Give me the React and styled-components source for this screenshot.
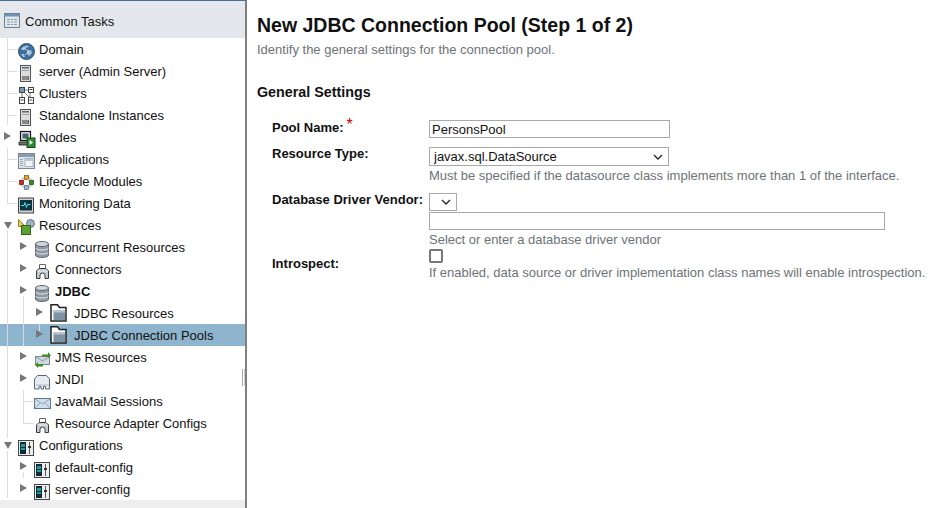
import React from "react";
import styled, { createGlobalStyle } from "styled-components";

const GlobalStyle = createGlobalStyle`
  html, body {
    margin: 0;
    padding: 0;
    background: #fff;
    font-family: "Liberation Sans", Arial, sans-serif;
  }
`;

const chevron = encodeURIComponent(
  '<svg xmlns="http://www.w3.org/2000/svg" width="10" height="6" viewBox="0 0 10 6"><path d="M1 1l4 4 4-4" fill="none" stroke="#222" stroke-width="1.3"/></svg>'
);

const Page = styled.div`
  display: flex;
  width: 930px;
  height: 508px;
  overflow: hidden;
`;

const Sidebar = styled.aside`
  position: relative;
  flex: none;
  width: 245px;
  display: flex;
  flex-direction: column;
  border-right: 2px solid #808080;
  border-top: 1px solid #4a7097;
  background: #fff;
`;

const Handle = styled.div`
  position: absolute;
  right: 0;
  top: 368px;
  width: 1px;
  height: 17px;
  border-left: 1px solid #aaaaaa;
  border-right: 1px solid #d0d0d0;
`;

const TasksHeader = styled.div`
  flex: none;
  height: 37px;
  box-sizing: border-box;
  padding: 3px 0 0 4px;
  display: flex;
  align-items: center;
  gap: 4px;
  background: #e4e8ec;
  color: #111;
  font-size: 13px;
`;

const Tree = styled.div`
  flex: none;
  display: flex;
  flex-direction: column;
`;

const Footer = styled.div`
  flex: 1;
  background: #eeeeee;
`;

const lineImages = (lines, color) =>
  lines.map(() => `linear-gradient(${color}, ${color})`).join(",");

const Row = styled.div`
  height: 22px;
  box-sizing: border-box;
  display: flex;
  align-items: center;
  padding-left: ${(p) => 4 + p.$level * 16}px;
  color: #111;
  font-size: 13px;
  font-weight: ${(p) => (p.$bold ? 700 : 400)};
  background-color: ${(p) => (p.$selected ? "#8fb4cd" : "transparent")};
  background-repeat: no-repeat;
  background-image: ${(p) =>
    p.$lines.length ? lineImages(p.$lines, p.$selected ? "#cfdfe9" : "#dddddd") : "none"};
  background-position: ${(p) => p.$lines.map((l) => `${l[0]}px ${l[1]}px`).join(",") || "0 0"};
  background-size: ${(p) => p.$lines.map((l) => `${l[2]}px ${l[3]}px`).join(",") || "auto"};
`;

const ArrowSlot = styled.span`
  flex: none;
  width: 14px;
  height: 14px;
  display: flex;
  align-items: center;
`;

const ArrowRight = styled.span`
  width: 0;
  height: 0;
  margin-top: -2px;
  border-left: 7px solid #777;
  border-top: 4px solid transparent;
  border-bottom: 4px solid transparent;
`;

const ArrowDown = styled.span`
  width: 0;
  height: 0;
  margin-top: 1px;
  border-top: 7px solid #777;
  border-left: 4px solid transparent;
  border-right: 4px solid transparent;
`;

const IconSlot = styled.span`
  flex: none;
  width: 17px;
  height: 17px;
  margin-top: 5px;
  margin-right: ${(p) => (p.$level === 2 ? 7 : 4)}px;
  svg {
    display: block;
    overflow: visible;
  }
`;

const Main = styled.main`
  flex: 1;
  min-width: 0;
  padding: 15px 0 0 10px;
  color: #000;
`;

const Title = styled.h1`
  margin: 0;
  font-size: 19.5px;
  line-height: 21px;
  font-weight: 700;
  color: #111;
`;

const Subtitle = styled.p`
  margin: 6px 0 0;
  font-size: 13px;
  line-height: 16px;
  color: #6d7378;
`;

const SectionTitle = styled.h2`
  margin: 25px 0 0;
  font-size: 14.3px;
  line-height: 18px;
  font-weight: 700;
  color: #111;
`;

const Form = styled.div`
  display: grid;
  grid-template-columns: 157px 1fr;
  padding: 19px 0 0 15px;
`;

const Label = styled.div`
  font-size: 13px;
  line-height: 16px;
  font-weight: 700;
  color: #111;
  margin-top: ${(p) => p.$top}px;
`;

const Required = styled.span`
  color: #c00;
  font-weight: 400;
  font-size: 16px;
  margin-left: 3px;
  vertical-align: 2px;
  line-height: 0;
`;

const Field = styled.div`
  display: flex;
  flex-direction: column;
  align-items: flex-start;
  gap: 1px;
  padding-bottom: ${(p) => p.$bottom || 0}px;
`;

const TextInput = styled.input`
  box-sizing: border-box;
  width: ${(p) => p.$width}px;
  height: 18px;
  margin: 0;
  padding: 0 2px;
  border: 1px solid #a9a9a9;
  border-radius: 0;
  outline: none;
  font-family: inherit;
  font-size: 13px;
  color: #111;
`;

const Select = styled.select`
  box-sizing: border-box;
  appearance: none;
  width: ${(p) => p.$width}px;
  height: ${(p) => p.$height}px;
  margin: 0;
  padding: 0 0 0 4px;
  border: 1px solid #a9a9a9;
  border-radius: 0;
  background: #fff url("data:image/svg+xml,${chevron}") no-repeat right 5px center;
  font-family: inherit;
  font-size: 13px;
  color: #111;
`;

const Help = styled.div`
  margin-top: 1px;
  font-size: 13px;
  line-height: 16px;
  color: #6d7378;
  white-space: nowrap;
`;

const Check = styled.span`
  display: block;
  box-sizing: border-box;
  width: 14px;
  height: 14px;
  border: 2px solid #77767f;
  border-radius: 2px;
  background: #fff;
`;

const Table = () => (
  <svg width="17" height="16" viewBox="0 0 17 16">
    <rect x="0.5" y="0.5" width="15" height="14" fill="#dfe7ef" stroke="#6f8296" />
    <rect x="1" y="1" width="14" height="2.5" fill="#6f93b8" />
    <path d="M3 6h3v1H3zM7 6h2v1H7zM10 6h3v1h-3zM3 8.5h3v1H3zM7 8.5h2v1H7zM10 8.5h3v1h-3zM3 11h3v1H3zM7 11h2v1H7zM10 11h3v1h-3z" fill="#8a97a5" />
  </svg>
);

const Globe = () => (
  <svg width="17" height="17" viewBox="0 0 17 17">
    <circle cx="8.5" cy="8.5" r="8" fill="#3f6f9f" stroke="#2d5378" />
    <path d="M3 6c2-3 5-4 8-3-1 2-3 1-4 3s-3 1-4 0zM9 8l4-1 1 3-3 3-2-2zM3 11l3 0 1 3-2 0z" fill="#a9c3da" />
    <path d="M5 5l6 3-4 4" fill="none" stroke="#e6eef5" strokeWidth="0.7" />
  </svg>
);

const ServerBox = () => (
  <svg width="17" height="17" viewBox="0 0 17 17">
    <rect x="2.5" y="0.5" width="10" height="16" fill="#dcdcdc" stroke="#555" />
    <rect x="4" y="2" width="7" height="1.5" fill="#5c6b7a" />
    <rect x="4" y="5" width="7" height="1" fill="#9aa4ad" />
    <rect x="4" y="11" width="7" height="4" fill="#666" />
    <path d="M5 11v4M7 11v4M9 11v4" stroke="#ccc" strokeWidth="0.7" />
  </svg>
);

const Clusters = () => (
  <svg width="17" height="17" viewBox="0 0 17 17">
    <path d="M5 4l7 7M4 6v5M12 5v6M6 3h4" stroke="#555" fill="none" strokeWidth="0.8" />
    <rect x="1.5" y="0.5" width="5" height="5" fill="#6f9cc2" stroke="#444" />
    <rect x="10.5" y="0.5" width="5" height="5" fill="#fff" stroke="#444" />
    <rect x="1.5" y="10.5" width="5" height="6" fill="#fff" stroke="#444" />
    <rect x="10.5" y="10.500" width="5" height="6" fill="#fff" stroke="#444" />
    <path d="M11.5 2.500h3M2.500 13h3M11.500 13h3" stroke="#444" />
  </svg>
);

const Nodes = () => (
  <svg width="17" height="17" viewBox="0 0 17 17">
    <rect x="2.500" y="0.500" width="10" height="9" fill="#dfe6ea" stroke="#111" strokeWidth="1.200" />
    <rect x="4.500" y="2.500" width="6" height="5" fill="#4e6470" />
    <path d="M1 11h11v3H1z" fill="#777" stroke="#111" strokeWidth="0.800" />
    <rect x="9" y="7" width="8" height="9.500" fill="#2e8b2e" stroke="#14491a" />
    <path d="M11.500 9v5l3.500-2.500z" fill="#fff" />
  </svg>
);

const Apps = () => (
  <svg width="17" height="17" viewBox="0 0 17 17">
    <rect x="0.500" y="0.500" width="16" height="15" fill="#dde3e8" stroke="#7b8793" />
    <rect x="1" y="1" width="15" height="3" fill="#8b9cac" />
    <path d="M2 6h3v1H2zM2 8h3v1H2zM2 10h3v1H2zM2 12h3v1H2z" fill="#9cadbc" />
    <rect x="7" y="5.500" width="8" height="8" fill="#f3f6f8" stroke="#a5b5c2" />
    <rect x="7.500" y="6" width="7" height="2" fill="#b8c6d2" />
  </svg>
);

const Lifecycle = () => (
  <svg width="17" height="17" viewBox="0 0 17 17">
    <circle cx="8.500" cy="7.500" r="5.500" fill="none" stroke="#b5bdc6" strokeWidth="1.300" />
    <rect x="6.500" y="0.500" width="4" height="4" fill="#e8a020" stroke="#7a5a10" strokeWidth="0.700" />
    <rect x="1.500" y="5.500" width="4" height="4" fill="#cc2a2a" stroke="#701010" strokeWidth="0.700" />
    <rect x="11.500" y="5.500" width="4" height="4" fill="#3a8a2a" stroke="#1c4a12" strokeWidth="0.700" />
    <rect x="6.500" y="10.500" width="4" height="4" fill="#9fb8d2" stroke="#51708f" strokeWidth="0.700" />
  </svg>
);

const Monitor = () => (
  <svg width="17" height="17" viewBox="0 0 17 17">
    <rect x="0.500" y="1" width="15" height="15" fill="#d4d4d4" stroke="#444" />
    <rect x="2" y="3" width="12" height="10.500" fill="#0c3440" />
    <path d="M3 8.500h3l1-3 1.500 5 1-3h3" fill="none" stroke="#4fe3e0" />
  </svg>
);

const ResourcesGlyph = () => (
  <svg width="17" height="17" viewBox="0 0 17 17">
    <circle cx="12.500" cy="4.500" r="4" fill="#9db2c6" stroke="#66798c" />
    <path d="M0.500 0.500l7 7h-7z" fill="#f3c95c" stroke="#a57c1e" />
    <rect x="3.500" y="6.500" width="9" height="9" fill="#5aa12f" stroke="#33661a" />
  </svg>
);

const Database = () => (
  <svg width="17" height="17" viewBox="0 0 17 17">
    <path d="M1.500 3v11c0 1.500 2.500 2.500 6.500 2.500s6.500-1 6.500-2.500V3z" fill="#8f99a3" stroke="#5f6973" />
    <ellipse cx="8" cy="3" rx="6.500" ry="2.500" fill="#cfd6dc" stroke="#5f6973" />
    <path d="M1.500 7c1 1.500 3 2 6.500 2s5.500-.5 6.500-2M1.500 11c1 1.500 3 2 6.500 2s5.500-.5 6.500-2" fill="none" stroke="#e4e8eb" />
  </svg>
);

const Connector = () => (
  <svg width="17" height="17" viewBox="0 0 17 17">
    <path d="M5.500 5V1.500h6V5" fill="#fff" stroke="#666" />
    <path d="M2.500 15.500V8L5 5.500h7L14.500 8v7.500h-3.500v-3a2.500 2.500 0 0 0-5 0v3z" fill="#c2c9d0" stroke="#3a3a3a" />
    <path d="M3.500 8h10" stroke="#eef1f3" />
  </svg>
);

const Folder = () => (
  <svg width="17" height="17" viewBox="0 4 17 17">
    <path d="M1 18V1.800h6.500l2 2.700H16V18z" fill="#fff" stroke="#222" strokeWidth="1.500" />
    <path d="M3.500 17V7h11.500v10z" fill="#7f93a6" />
    <path d="M3.500 7h11.500v2.500H3.500z" fill="#b7c4d0" />
  </svg>
);

const Jms = () => (
  <svg width="17" height="17" viewBox="0 0 17 17">
    <rect x="1.500" y="5.500" width="14" height="8" fill="#cfd8e0" stroke="#7a8794" />
    <path d="M2 6l6.500 4L15 6" fill="none" stroke="#8c98a4" />
    <path d="M8 3.500h6V1l3 3.500L14 7V5.500H8z" fill="#3b8f1f" />
    <path d="M9 13h-5v-2l-3 3 3 3v-1.500h5z" fill="#3b8f1f" />
  </svg>
);

const Jndi = () => (
  <svg width="17" height="17" viewBox="0 0 17 17">
    <path d="M0.500 16V6l3-3.500h9l3 3.500v10h-4v-2.500h-2V16H7v-2.500H5V16z" fill="#e6ebf0" stroke="#5a6875" />
    <path d="M2 12h13" stroke="#aeb9c3" />
  </svg>
);

const Mail = () => (
  <svg width="17" height="17" viewBox="0 0 17 17">
    <rect x="0.500" y="3.500" width="16" height="10" fill="#cfe0ec" stroke="#607a90" />
    <path d="M1 4l7.500 5L16 4M1 13l5.500-5.500M16 13l-5.500-5.500" fill="none" stroke="#8da3b5" />
  </svg>
);

const Config = () => (
  <svg width="17" height="17" viewBox="0 0 17 17">
    <rect x="0.500" y="1.500" width="15" height="15" fill="#eee" stroke="#444" />
    <rect x="2" y="3" width="6" height="12" fill="#142a33" />
    <rect x="3" y="5" width="4" height="3" fill="#1aa0a0" />
    <rect x="3" y="9" width="4" height="2" fill="#1aa0a0" />
    <path d="M11.500 3v12" stroke="#555" />
    <rect x="10" y="7" width="3" height="2" fill="#333" />
  </svg>
);

const rows = [
  { icon: Globe, text: "Domain", level: 0, lines: [[7, 0, 1, 22], [7, 11, 10, 1]] },
  { icon: ServerBox, text: "server (Admin Server)", level: 0, lines: [[7, 0, 1, 22], [7, 11, 10, 1]] },
  { icon: Clusters, text: "Clusters", level: 0, lines: [[7, 0, 1, 22], [7, 11, 10, 1]] },
  { icon: ServerBox, text: "Standalone Instances", level: 0, lines: [[7, 0, 1, 21], [7, 11, 10, 1]] },
  { icon: Nodes, text: "Nodes", level: 0, arrow: "right", lines: [] },
  { icon: Apps, text: "Applications", level: 0, lines: [[7, 0, 1, 22], [7, 11, 10, 1]] },
  { icon: Lifecycle, text: "Lifecycle Modules", level: 0, lines: [[7, 0, 1, 22], [7, 11, 10, 1]] },
  { icon: Monitor, text: "Monitoring Data", level: 0, lines: [[7, 0, 1, 12], [7, 11, 10, 1]] },
  { icon: ResourcesGlyph, text: "Resources", level: 0, arrow: "down", lines: [[7, 16, 1, 6]] },
  { icon: Database, text: "Concurrent Resources", level: 1, arrow: "right", lines: [[7, 0, 1, 22]] },
  { icon: Connector, text: "Connectors", level: 1, arrow: "right", lines: [[7, 0, 1, 22]] },
  { icon: Database, text: "JDBC", level: 1, arrow: "right", bold: true, lines: [[7, 0, 1, 22], [23, 16, 1, 6]] },
  { icon: Folder, text: "JDBC Resources", level: 2, arrow: "right", lines: [[7, 0, 1, 22], [23, 0, 1, 22]] },
  { icon: Folder, text: "JDBC Connection Pools", level: 2, arrow: "right", selected: true, lines: [[7, 0, 1, 22], [23, 0, 1, 22], [39, 0, 1, 7]] },
  { icon: Jms, text: "JMS Resources", level: 1, arrow: "right", lines: [[7, 0, 1, 22]] },
  { icon: Jndi, text: "JNDI", level: 1, arrow: "right", lines: [[7, 0, 1, 22]] },
  { icon: Mail, text: "JavaMail Sessions", level: 1, lines: [[7, 0, 1, 22], [23, 0, 1, 22], [23, 11, 10, 1]] },
  { icon: Connector, text: "Resource Adapter Configs", level: 1, lines: [[7, 0, 1, 22], [23, 0, 1, 12], [23, 11, 10, 1]] },
  { icon: Config, text: "Configurations", level: 0, arrow: "down", lines: [[7, 0, 1, 4], [7, 17, 1, 5]] },
  { icon: Config, text: "default-config", level: 1, arrow: "right", lines: [[7, 0, 1, 22], [23, 16, 1, 6]] },
  { icon: Config, text: "server-config", level: 1, arrow: "right", lines: [[7, 0, 1, 20]] },
];

const TreeRow = ({ row }) => {
  const Icon = row.icon;
  return (
    <Row $level={row.level} $bold={row.bold} $selected={row.selected} $lines={row.lines}>
      <ArrowSlot>
        {row.arrow === "right" && <ArrowRight />}
        {row.arrow === "down" && <ArrowDown />}
      </ArrowSlot>
      <IconSlot $level={row.level}>
        <Icon />
      </IconSlot>
      {row.text}
    </Row>
  );
};

export default function App() {
  return (
    <Page>
      <GlobalStyle />
      <Sidebar>
        <TasksHeader>
          <Table />
          Common Tasks
        </TasksHeader>
        <Tree>
          {rows.map((row) => (
            <TreeRow key={row.text} row={row} />
          ))}
        </Tree>
        <Footer />
        <Handle />
      </Sidebar>
      <Main>
        <Title>New JDBC Connection Pool (Step 1 of 2)</Title>
        <Subtitle>Identify the general settings for the connection pool.</Subtitle>
        <SectionTitle>General Settings</SectionTitle>
        <Form>
          <Label $top={0}>
            Pool Name:<Required>*</Required>
          </Label>
          <Field $bottom={9}>
            <TextInput $width={241} defaultValue="PersonsPool" />
          </Field>
          <Label $top={-1}>Resource Type:</Label>
          <Field $bottom={9}>
            <Select $width={240} $height={19} defaultValue="ds">
              <option value="ds">javax.sql.DataSource</option>
            </Select>
            <Help>Must be specified if the datasource class implements more than 1 of the interface.</Help>
          </Field>
          <Label $top={-1}>Database Driver Vendor:</Label>
          <Field $bottom={1}>
            <Select $width={28} $height={18} defaultValue="">
              <option value=""></option>
            </Select>
            <TextInput $width={456} />
            <Help>Select or enter a database driver vendor</Help>
          </Field>
          <Label $top={7}>Introspect:</Label>
          <Field>
            <Check />
            <Help>If enabled, data source or driver implementation class names will enable introspection.</Help>
          </Field>
        </Form>
      </Main>
    </Page>
  );
}
